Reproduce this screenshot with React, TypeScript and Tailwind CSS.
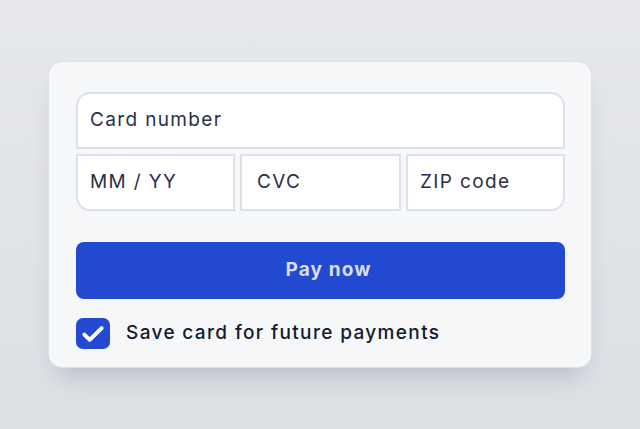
import React from "react";

export default function App() {
  return (
    <div
      className="w-[640px] h-[429px] flex justify-center bg-gradient-to-b from-[#e6e8ec] to-[#dcdfe4] pt-[61px] tracking-[0.085em]"
      style={{ fontFamily: "Inter, 'Noto Sans', sans-serif" }}
    >
      <div className="w-[544px] h-[307px] rounded-[14px] bg-[#f6f7f9] border border-[#dde0e6] shadow-[0_16px_24px_-10px_rgba(120,128,145,0.4)] pl-[27px] pr-[26px] pt-[30px]">
        <div className="flex flex-col gap-[5px]">
          <div className="h-[57px] bg-white border-2 border-[#dde1e8] rounded-t-[14px] flex items-center px-[12px] text-[19px] text-[#2a2f45]">
            Card number
          </div>
          <div className="flex gap-[5px]">
            <div className="w-[159px] h-[57px] bg-white border-2 border-[#dde1e8] rounded-bl-[14px] flex items-center px-[12px] text-[19px] text-[#2a2f45]">
              MM / YY
            </div>
            <div className="w-[161px] h-[57px] bg-white border-2 border-[#dde1e8] flex items-center px-[15px] text-[19px] text-[#2a2f45]">
              CVC
            </div>
            <div className="flex-1 h-[57px] bg-white border-2 border-[#dde1e8] rounded-br-[14px] flex items-center px-[12px] text-[19px] text-[#2a2f45]">
              ZIP code
            </div>
          </div>
        </div>
        <button className="mt-[31px] w-full h-[57px] rounded-[8px] bg-[#2349d1] text-[#d9ddec] text-[19px] font-bold flex items-center justify-center tracking-[0.06em] pl-[16px]">
          Pay now
        </button>
        <div className="mt-[19px] flex items-center gap-[16px]">
          <div className="w-[34px] h-[31px] rounded-[7px] bg-[#2349d1] flex items-center justify-center">
            <svg width="26" height="26" viewBox="0 0 24 24" fill="none">
              <path d="M4 12.5l5 5L20 6.5" stroke="white" strokeWidth="3.6" strokeLinecap="round" strokeLinejoin="round" />
            </svg>
          </div>
          <span className="text-[19px] text-[#141a2e] font-medium">Save card for future payments</span>
        </div>
      </div>
    </div>
  );
}
